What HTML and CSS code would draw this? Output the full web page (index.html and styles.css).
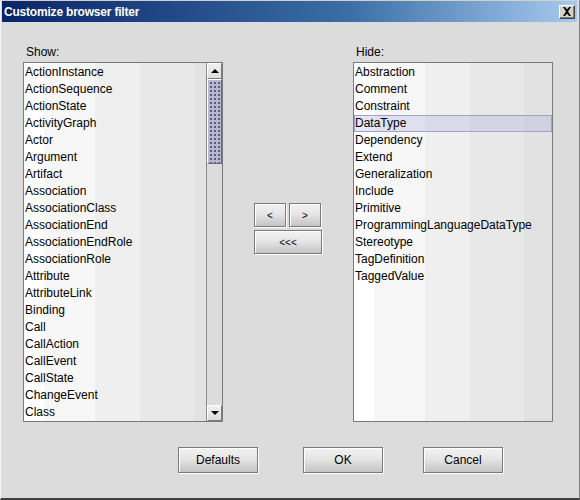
FILE: index.html
```html
<!DOCTYPE html>
<html>
<head>
<meta charset="utf-8">
<link rel="stylesheet" href="styles.css">
</head>
<body>
<div class="window">
  <div class="titlebar">
    <span class="title">Customize browser filter</span>
    <span class="close"><svg width="10" height="9" viewBox="0 0 10 9"><path d="M1 0h2l2 2.5L7 0h2L6 4.5 9 9H7L5 6.5 3 9H1l3-4.5z" fill="#000"/></svg></span>
  </div>
  <div class="content">
    <div class="panels">
      <div class="panel">
        <div class="label">Show:</div>
        <div class="list">
          <div class="items">
            <div class="item">ActionInstance</div>
            <div class="item">ActionSequence</div>
            <div class="item">ActionState</div>
            <div class="item">ActivityGraph</div>
            <div class="item">Actor</div>
            <div class="item">Argument</div>
            <div class="item">Artifact</div>
            <div class="item">Association</div>
            <div class="item">AssociationClass</div>
            <div class="item">AssociationEnd</div>
            <div class="item">AssociationEndRole</div>
            <div class="item">AssociationRole</div>
            <div class="item">Attribute</div>
            <div class="item">AttributeLink</div>
            <div class="item">Binding</div>
            <div class="item">Call</div>
            <div class="item">CallAction</div>
            <div class="item">CallEvent</div>
            <div class="item">CallState</div>
            <div class="item">ChangeEvent</div>
            <div class="item">Class</div>
          </div>
          <div class="scrollbar">
            <div class="arrow up"><svg width="8" height="4" viewBox="0 0 8 4"><path d="M4 0L8 4H0z" fill="#000"/></svg></div>
            <div class="track">
              <div class="thumb"></div>
            </div>
            <div class="arrow down"><svg width="8" height="4" viewBox="0 0 8 4"><path d="M0 0H8L4 4z" fill="#000"/></svg></div>
          </div>
        </div>
      </div>
      <div class="middle">
        <div class="btnrow">
          <button class="btn small">&lt;</button>
          <button class="btn small">&gt;</button>
        </div>
        <button class="btn wide">&lt;&lt;&lt;</button>
      </div>
      <div class="panel">
        <div class="label">Hide:</div>
        <div class="list">
          <div class="items">
            <div class="item">Abstraction</div>
            <div class="item">Comment</div>
            <div class="item">Constraint</div>
            <div class="item selected">DataType</div>
            <div class="item">Dependency</div>
            <div class="item">Extend</div>
            <div class="item">Generalization</div>
            <div class="item">Include</div>
            <div class="item">Primitive</div>
            <div class="item">ProgrammingLanguageDataType</div>
            <div class="item">Stereotype</div>
            <div class="item">TagDefinition</div>
            <div class="item">TaggedValue</div>
          </div>
        </div>
      </div>
    </div>
    <div class="actions">
      <button class="btn action defaults">Defaults</button>
      <button class="btn action ok">OK</button>
      <button class="btn action cancel">Cancel</button>
    </div>
  </div>
</div>
</body>
</html>
```
FILE: styles.css
```css
* { box-sizing: border-box; }
html, body { margin: 0; padding: 0; background: #dcdcdc; }
body { font-family: "Liberation Sans", Arial, sans-serif; font-size: 12px; color: #000; }

.window {
  width: 580px;
  height: 500px;
  background: #dcdcdc;
  border-left: 1px solid #f4f4f4;
  border-top: 1px solid #d4d0c8;
  border-right: 1px solid #808080;
  border-bottom: 2px solid #404040;
  padding: 0 2px 0 1px;
  display: flex;
  flex-direction: column;
}

.titlebar {
  height: 21px;
  background: linear-gradient(to right, #0a246a 0%, #3a6ea5 60%, #a6caf0 100%);
  display: flex;
  align-items: center;
  justify-content: space-between;
  padding: 0 2px 0 2px;
}
.title {
  color: #fff;
  font-family: "Liberation Sans", Arial, sans-serif;
  font-weight: bold;
  font-size: 12px;
  letter-spacing: -0.2px;
}
.close {
  width: 16px;
  height: 14px;
  background: #d4d0c8;
  border: 1px solid;
  border-color: #fff #404040 #404040 #fff;
  box-shadow: inset -1px -1px 0 #808080;
  display: flex;
  align-items: center;
  justify-content: center;
}

.content {
  flex: 1;
  padding: 23px 0 0 21px;
  display: flex;
  flex-direction: column;
}

.panels {
  display: flex;
  gap: 31px;
}
.panel { width: 200px; display: flex; flex-direction: column; }
.label { height: 15px; line-height: 15px; padding-left: 3px; margin-bottom: 2px; }

.list {
  height: 360px;
  border: 1px solid #7a7a7a;
  display: flex;
  background: linear-gradient(to right, #ffffff 0px, #ffffff 20px, #f7f7f7 20px, #f7f7f7 71px, #efefef 71px, #efefef 116px, #e8e8e8 116px, #e8e8e8 170px, #e2e2e2 170px);
}
.items { flex: 1; padding-top: 1px; }
.item {
  height: 17px;
  line-height: 17px;
  padding-left: 1px;
  white-space: nowrap;
}
.item.selected {
  background: rgba(160, 160, 220, 0.28);
  border: 1px solid #a2a2c2;
  line-height: 15px;
  padding-left: 0;
}

.scrollbar {
  width: 16px;
  display: flex;
  flex-direction: column;
  border-left: 1px solid #8c8c8c;
  background: #dcdcdc;
}
.arrow {
  height: 16px;
  display: flex;
  align-items: center;
  justify-content: center;
  background: linear-gradient(to bottom, #f0f0f0, #dcdcdc);
  border: 1px solid;
  border-color: #fff #7a7a7a #7a7a7a #fff;
}
.track { flex: 1; }
.thumb {
  height: 85px;
  border: 1px solid #6a6a7a;
  border-top-color: #fff;
  border-left-color: #fff;
  background-color: #b8b8d0;
  background-image: radial-gradient(circle, #5a5a78 0.7px, transparent 1px);
  background-size: 4px 4px;
  background-position: 1px 1px;
}

.middle {
  width: 68px;
  padding-top: 158px;
  display: flex;
  flex-direction: column;
  gap: 3px;
}
.btnrow { display: flex; gap: 3px; }

.btn {
  font-family: "Liberation Sans", Arial, sans-serif;
  font-size: 12px;
  color: #000;
  border: 1px solid #7a7a7a;
  box-shadow: 1px 1px 0 #fff, inset 1px 1px 0 #fff;
  background: linear-gradient(to bottom, #f2f2f2 0%, #e6e6e6 45%, #d6d6d6 70%, #c4c4c4 100%);
  padding: 0;
  margin: 0;
  cursor: default;
}
.btn.small { width: 32px; height: 24px; font-size: 10px; }
.btn.wide { width: 68px; height: 24px; font-size: 10px; }

.actions {
  display: flex;
  margin-top: 25px;
  padding-left: 155px;
}
.btn.action { width: 80px; height: 26px; }
.btn.ok { margin-left: 45px; }
.btn.cancel { margin-left: 40px; }
```
